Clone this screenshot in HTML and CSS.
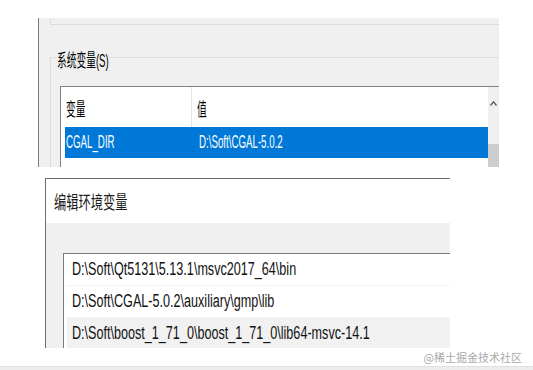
FILE: index.html
```html
<!DOCTYPE html>
<html lang="zh-CN">

<head>
    <meta charset="UTF-8">
    <meta name="viewport" content="width=device-width, initial-scale=1.0">
    <title>环境变量</title>
    <link rel="stylesheet" href="styles.css">
</head>

<body>

    <!-- 系统变量 -->
    <div class="shot shot-env">
        <div class="group-prev"></div>
        <div class="group">
            <span class="legend"><span class="sq sq-top">系统变量(S)</span></span>
            <div class="listview">
                <div class="lv-main">
                    <div class="lv-head">
                        <div class="col col-name"><span class="sq sq-top">变量</span></div>
                        <div class="col col-value"><span class="sq sq-top">值</span></div>
                    </div>
                    <div class="lv-row selected">
                        <div class="col col-name"><span class="sq sq-top">CGAL_DIR</span></div>
                        <div class="col col-value"><span class="sq sq-top">D:\Soft\CGAL-5.0.2</span></div>
                    </div>
                </div>
                <div class="scrollbar">
                    <svg class="arrow" width="7" height="5" viewBox="0 0 7 5">
                        <polyline points="0.5,4.5 3.5,0.8 6.5,4.5" fill="none" stroke="#555" stroke-width="1.2" />
                    </svg>
                    <div class="thumb"></div>
                </div>
            </div>
        </div>
    </div>

    <!-- 编辑环境变量 -->
    <div class="shot shot-edit">
        <div class="dlg-title"><span class="sq sq-title">编辑环境变量</span></div>
        <div class="dlg-body">
            <div class="path-list">
                <div class="path-row"><span class="sq sq-wide">D:\Soft\Qt5131\5.13.1\msvc2017_64\bin</span></div>
                <div class="path-row"><span class="sq sq-wide">D:\Soft\CGAL-5.0.2\auxiliary\gmp\lib</span></div>
                <div class="path-row current"><span class="sq sq-wide">D:\Soft\boost_1_71_0\boost_1_71_0\lib64-msvc-14.1</span></div>
            </div>
        </div>
    </div>

    <div class="watermark">@稀土掘金技术社区</div>
    <div class="page-strip"></div>

</body>

</html>
```

FILE: styles.css
```css
body {
    margin: 0;
    background-color: #fff;
    font-family: "Liberation Sans", "Noto Sans CJK SC", sans-serif;
    font-size: 18px;
    color: #000;
    overflow: hidden;
}

/* screenshot text is squeezed horizontally */
.sq {
    display: inline-block;
    white-space: nowrap;
    transform-origin: 0 50%;
}

.sq-top {
    transform: scaleX(0.54);
}

.sq-title {
    transform: scaleX(0.68);
}

.sq-wide {
    transform: scaleX(0.70);
}

/* top screenshot */
.shot-env {
    margin: 18px 0 0 38px;
    width: 460px;
    height: 149px;
    background-color: #f0f0f0;
    border-left: 1px solid #7c7c7c;
    overflow: hidden;
}

.group-prev {
    margin-left: 11px;
    height: 6px;
    border-left: 1px solid #dcdcdc;
    border-bottom: 1px solid #dcdcdc;
}

.group {
    position: relative;
    margin: 32px 0 0 11px;
    height: 110px;
    border-left: 1px solid #dcdcdc;
    border-top: 1px solid #dcdcdc;
}

.legend {
    position: absolute;
    top: -8px;
    left: 5px;
    width: 53px;
    padding-left: 1px;
    line-height: 22px;
    background-color: #f0f0f0;
    white-space: nowrap;
}

.listview {
    display: flex;
    margin: 28px 0 0 9px;
    height: 81px;
    background-color: #fff;
    border-top: 1px solid #828282;
    border-left: 1px solid #828282;
}

.lv-main {
    flex: 1;
    overflow: hidden;
}

.lv-head {
    display: flex;
    height: 40px;
}

.lv-head .col {
    padding-top: 11px;
    line-height: 24px;
    padding-left: 5px;
}

.lv-head .col-name {
    width: 131px;
    box-sizing: border-box;
    border-right: 1px solid #e5e5e5;
}

.lv-row {
    display: flex;
    align-items: center;
    height: 31px;
    margin-left: 4px;
}

.lv-row.selected {
    background-color: #0078d7;
    color: #fff;
}

.lv-row .col-name {
    width: 132px;
    padding-left: 1px;
}

.lv-row .col-value {
    padding-left: 1px;
}

.scrollbar {
    width: 11px;
    display: flex;
    flex-direction: column;
    align-items: center;
    background-color: #f0f0f0;
}

.scrollbar .arrow {
    margin-top: 14px;
}

.scrollbar .thumb {
    margin-top: auto;
    width: 11px;
    height: 24px;
    background-color: #cdcdcd;
}

/* bottom screenshot */
.shot-edit {
    margin: 11px 0 0 45px;
    width: 404px;
    border-left: 1px solid #6e6e6e;
    border-top: 1px solid #6e6e6e;
}

.dlg-title {
    display: flex;
    align-items: center;
    height: 44px;
    padding-left: 8px;
    background-color: #fff;
    color: #1a1a1a;
}

.dlg-body {
    height: 125px;
    box-sizing: border-box;
    padding: 30px 0 0 17px;
    background-color: #f0f0f0;
}

.path-list {
    height: 95px;
    box-sizing: border-box;
    background-color: #fff;
    border-top: 1px solid #7a7a7a;
    border-left: 1px solid #7a7a7a;
    overflow: hidden;
}

.path-row {
    display: flex;
    align-items: center;
    height: 31px;
    margin-left: 3px;
    padding-left: 5px;
    border-bottom: 1px solid #f3f3f3;
    color: #111;
}

.path-row.current {
    background-color: #f1f1f1;
    border-bottom: none;
}

.watermark {
    height: 18px;
    line-height: 18px;
    padding-right: 11px;
    text-align: right;
    font-family: "Noto Sans CJK SC", sans-serif;
    font-size: 11px;
    color: #a9a9a9;
}

.page-strip {
    height: 4px;
    background-color: #ececec;
    border-top: 1px solid #e0e0e0;
}
```
